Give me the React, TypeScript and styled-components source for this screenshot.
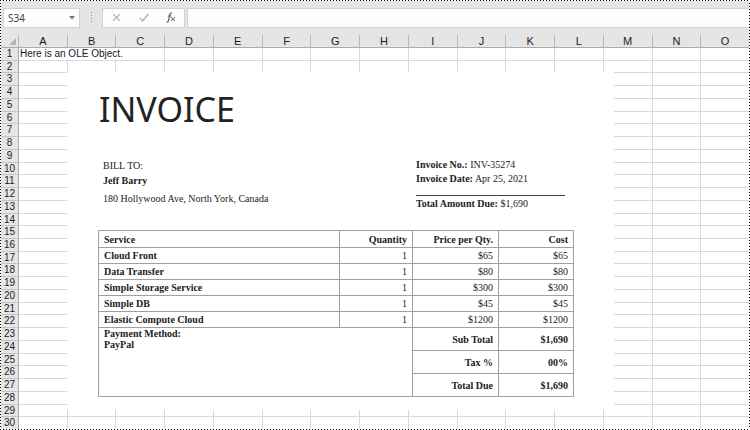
import React from "react";
import styled, { createGlobalStyle } from "styled-components";

const COLUMNS = "ABCDEFGHIJKLMNO".split("");
const ROWS = Array.from({ length: 30 }, (_, i) => i + 1);
const CELLS: Record<string, string> = { A1: "Here is an OLE Object." };

const SERVICES = [
  { name: "Cloud Front", quantity: 1, price: "$65", cost: "$65" },
  { name: "Data Transfer", quantity: 1, price: "$80", cost: "$80" },
  { name: "Simple Storage Service", quantity: 1, price: "$300", cost: "$300" },
  { name: "Simple DB", quantity: 1, price: "$45", cost: "$45" },
  { name: "Elastic Compute Cloud", quantity: 1, price: "$1200", cost: "$1200" },
];

const TOTALS = [
  ["Sub Total", "$1,690"],
  ["Tax %", "00%"],
  ["Total Due", "$1,690"],
];

const GlobalStyle = createGlobalStyle`
  * { box-sizing: border-box; }
  body { margin: 0; background: #fff; }
`;

const Window = styled.main`
  position: relative;
  display: flex;
  flex-direction: column;
  min-height: 100vh;
  overflow: hidden;
  background: #fff;
  color: #1c1c24;
  font-family: "Liberation Sans", Arial, sans-serif;
  font-size: 10px;
`;

const Marquee = styled.div`
  position: absolute;
  inset: 0;
  pointer-events: none;
  background:
    repeating-linear-gradient(90deg, #000 0 1px, #fff 1px 3px) top / 100% 1px no-repeat,
    repeating-linear-gradient(90deg, #000 0 1px, #fff 1px 3px) bottom / 100% 1px no-repeat,
    repeating-linear-gradient(#000 0 1px, #fff 1px 3px) left / 1px 100% no-repeat,
    repeating-linear-gradient(#000 0 1px, #fff 1px 3px) right / 1px 100% no-repeat;
`;

const FormulaBar = styled.header`
  display: flex;
  align-items: center;
  height: 35px;
  padding: 0 0 0 3px;
  background: #e5e5e5;
`;

const BarField = styled.div`
  display: flex;
  align-items: center;
  height: 20px;
  border: 1px solid #d2d2d2;
  background: #fdfdfd;
`;

const NameBox = styled(BarField)`
  width: 77px;
`;

const NameInput = styled.input`
  flex: 1;
  min-width: 0;
  padding: 0 0 0 4px;
  border: 0;
  outline: 0;
  background: transparent;
  color: #444;
  font: 10px/16px "Noto Sans", sans-serif;
`;

const BarButton = styled.button<{ $width: number }>`
  display: flex;
  align-items: center;
  justify-content: center;
  width: ${(p) => p.$width}px;
  height: 18px;
  padding: 0;
  border: 0;
  background: transparent;
`;

const Grip = styled.svg`
  width: 22px;
  height: 20px;
`;

const Actions = styled(BarField)`
  width: 83px;
  justify-content: space-between;
`;

const FormulaField = styled(BarField)`
  flex: 1;
  margin-left: 2px;
`;

const FormulaInput = styled.input`
  width: 100%;
  height: 18px;
  padding: 0 4px;
  border: 0;
  outline: 0;
  background: transparent;
  font: inherit;
`;

const Sheet = styled.table`
  flex: 1;
  display: grid;
  grid-template-columns: 19px repeat(15, minmax(0, 1fr));
  grid-template-rows: 13px repeat(30, minmax(12px, 1fr));

  thead, tbody, tr { display: contents; }
`;

const ColumnHead = styled.th`
  padding: 0;
  border-right: 1px solid #b8b8b8;
  border-bottom: 1px solid #ababab;
  background: #e5e5e5;
  font-size: 11px;
  font-weight: 400;
  line-height: 12px;
  text-align: center;
`;

const SelectAll = styled.td`
  display: flex;
  align-items: flex-end;
  justify-content: flex-end;
  padding: 0 2px 2px 0;
  border-right: 1px solid #b8b8b8;
  border-bottom: 1px solid #ababab;
  background: #e5e5e5;
`;

const RowHead = styled.th`
  padding: 1px 0 0 1px;
  border-right: 1px solid #ababab;
  border-bottom: 1px solid #c4c4c4;
  background: #e5e5e5;
  font-size: 10px;
  font-weight: 400;
  line-height: 10px;
  text-align: center;
`;

const Cell = styled.td`
  padding: 1px 0 0 1px;
  border-right: 1px solid #d9d9d9;
  border-bottom: 1px solid #d9d9d9;
  line-height: 10px;
  white-space: nowrap;
`;

const OverflowText = styled.span`
  position: relative;
  background: #fff;
  color: #16161f;
`;

const Invoice = styled.article`
  position: absolute;
  top: 72px;
  left: 67px;
  width: 547px;
  padding: 16px 41px 13px 31px;
  background: #fff;
  color: #222;
  font: 10px/16px "Liberation Serif", "Times New Roman", serif;
`;

const Title = styled.h1`
  margin: 0;
  padding-left: 1px;
  color: #222;
  font: 400 34px/42px "Noto Sans", sans-serif;
`;

const Details = styled.section`
  display: flex;
  justify-content: space-between;
  padding: 28px 8px 0 5px;
`;

const Line = styled.p<{ $height: number }>`
  margin: 0;
  line-height: ${(p) => p.$height}px;
`;

const Summary = styled.div`
  width: 149px;
`;

const Rule = styled.hr`
  margin: 9px 0 1px;
  border: 0;
  border-top: 1px solid #444;
`;

const Items = styled.table`
  width: 100%;
  margin-top: 19px;
  border-collapse: collapse;
  table-layout: fixed;
`;

const ItemCell = styled.td<{ $height?: number; $bold?: boolean }>`
  height: ${(p) => p.$height ?? 16}px;
  padding: 1px 5px 0 5px;
  border: 1px solid #a0a0a0;
  font-weight: ${(p) => (p.$bold ? 700 : 400)};
  line-height: 12px;
  text-align: right;
`;

const ItemHead = styled(ItemCell).attrs({ as: "th", $bold: true, $height: 17 })``;

const ServiceHead = styled(ItemHead)`
  text-align: left;
`;

const ServiceCell = styled(ItemCell)`
  text-align: left;
`;

const PaymentCell = styled(ServiceCell)`
  padding-top: 0;
  line-height: 11px;
  vertical-align: top;
`;

const Col = styled.col<{ $width: number }>`
  width: ${(p) => p.$width}px;
`;

function InvoiceObject() {
  return (
    <Invoice>
      <Title>INVOICE</Title>
      <Details>
        <div>
          <Line $height={16}>BILL TO:</Line>
          <Line $height={14}><b>Jeff Barry</b></Line>
          <Line $height={22}>180 Hollywood Ave, North York, Canada</Line>
        </div>
        <Summary>
          <Line $height={14}><b>Invoice No.:</b> INV-35274</Line>
          <Line $height={14}><b>Invoice Date:</b> Apr 25, 2021</Line>
          <Rule />
          <Line $height={14}><b>Total Amount Due:</b> $1,690</Line>
        </Summary>
      </Details>
      <Items>
        <colgroup>
          <Col $width={241} />
          <Col $width={73} />
          <Col $width={86} />
          <Col $width={75} />
        </colgroup>
        <thead>
          <tr>
            <ServiceHead>Service</ServiceHead>
            <ItemHead>Quantity</ItemHead>
            <ItemHead>Price per Qty.</ItemHead>
            <ItemHead>Cost</ItemHead>
          </tr>
        </thead>
        <tbody>
          {SERVICES.map((s) => (
            <tr key={s.name}>
              <ServiceCell $bold>{s.name}</ServiceCell>
              <ItemCell>{s.quantity}</ItemCell>
              <ItemCell>{s.price}</ItemCell>
              <ItemCell>{s.cost}</ItemCell>
            </tr>
          ))}
          {TOTALS.map(([label, value], i) => (
            <tr key={label}>
              {i === 0 && (
                <PaymentCell $bold colSpan={2} rowSpan={3}>
                  Payment Method:
                  <br />
                  PayPal
                </PaymentCell>
              )}
              <ItemCell $bold $height={23}>{label}</ItemCell>
              <ItemCell $bold $height={23}>{value}</ItemCell>
            </tr>
          ))}
        </tbody>
      </Items>
    </Invoice>
  );
}

export default function App() {
  return (
    <Window>
      <GlobalStyle />
      <FormulaBar>
        <NameBox>
          <NameInput aria-label="Name box" defaultValue="S34" />
          <BarButton $width={14} aria-label="Named ranges">
            <svg width="6" height="4" viewBox="0 0 6 4"><path d="M0 0h6L3 3.5z" fill="#777" /></svg>
          </BarButton>
        </NameBox>
        <Grip viewBox="0 0 22 20" aria-hidden="true">
          <path d="M11 4h1v1h-1zM11 7h1v1h-1zM11 10h1v1h-1zM11 13h1v1h-1z" fill="#888" />
        </Grip>
        <Actions>
          <BarButton $width={27} aria-label="Cancel">
            <svg width="9" height="9" viewBox="0 0 9 9"><path d="M1 1l7 7M8 1L1 8" stroke="#b9b9b9" strokeWidth="1.3" fill="none" /></svg>
          </BarButton>
          <BarButton $width={27} aria-label="Enter">
            <svg width="10" height="9" viewBox="0 0 10 9"><path d="M.7 5l3 2.8L9.4 1" stroke="#b9b9b9" strokeWidth="1.7" fill="none" /></svg>
          </BarButton>
          <BarButton $width={27} aria-label="Insert function">
            <svg width="10" height="11" viewBox="0 0 10 11" fill="none" stroke="#555">
              <path d="M6 1.2C4.5.4 4 1.6 3.7 3L2.5 8.4C2.2 9.8 1.5 10.4.5 9.8M1.8 4h3.6" strokeWidth="1.1" />
              <path d="M5 5.3c1.5-.4 1.6 3.5 3.8 3.2M9.3 5.3C7.6 5 6.6 8.8 4.8 8.4" strokeWidth=".9" />
            </svg>
          </BarButton>
        </Actions>
        <FormulaField>
          <FormulaInput aria-label="Formula" />
        </FormulaField>
      </FormulaBar>
      <Sheet>
        <thead>
          <tr>
            <SelectAll>
              <svg width="7" height="7" viewBox="0 0 7 7"><path d="M7 0v7H0z" fill="#b4b4b4" /></svg>
            </SelectAll>
            {COLUMNS.map((c) => (
              <ColumnHead key={c} scope="col">{c}</ColumnHead>
            ))}
          </tr>
        </thead>
        <tbody>
          {ROWS.map((r) => (
            <tr key={r}>
              <RowHead scope="row">{r}</RowHead>
              {COLUMNS.map((c) => (
                <Cell key={c}>{CELLS[c + r] && <OverflowText>{CELLS[c + r]}</OverflowText>}</Cell>
              ))}
            </tr>
          ))}
        </tbody>
      </Sheet>
      <InvoiceObject />
      <Marquee />
    </Window>
  );
}
